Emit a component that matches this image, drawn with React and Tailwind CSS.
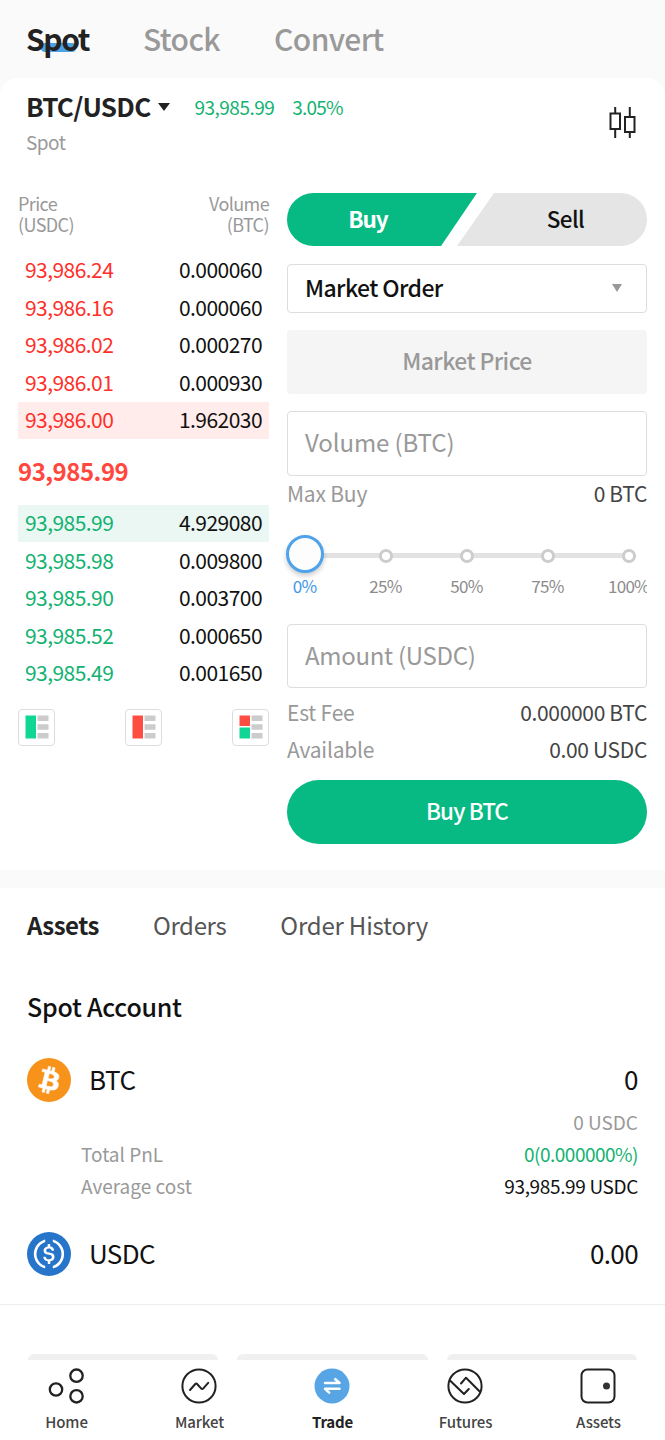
import React from 'react'

const asks = [
  { price: '93,986.24', volume: '0.000060' },
  { price: '93,986.16', volume: '0.000060' },
  { price: '93,986.02', volume: '0.000270' },
  { price: '93,986.01', volume: '0.000930' },
  { price: '93,986.00', volume: '1.962030', active: true },
]

const bids = [
  { price: '93,985.99', volume: '4.929080', active: true },
  { price: '93,985.98', volume: '0.009800' },
  { price: '93,985.90', volume: '0.003700' },
  { price: '93,985.52', volume: '0.000650' },
  { price: '93,985.49', volume: '0.001650' },
]

const steps = ['0%', '25%', '50%', '75%', '100%']

function TopTabs() {
  return (
    <div className="flex h-[78px] items-center gap-[54px] bg-[#fafafa] pb-[2px] pl-[26px] text-[30px] font-medium leading-[40px] tracking-[-0.6px] text-[#999]">
      <button className="relative font-bold text-[#222]">
        <span className="absolute bottom-[6px] left-[15px] h-[9px] w-[35px] rounded-[4px] bg-[#4fa1e6]" />
        <span className="relative tracking-[-1.4px]">Spot</span>
      </button>
      <button>Stock</button>
      <button>Convert</button>
    </div>
  )
}

function PairHeader() {
  return (
    <div className="flex h-[115px] justify-between pl-[26px] pr-[29px] pt-[13px]">
      <div>
        <div className="flex h-8 items-center">
          <h1 className="pb-[3px] text-[26px] font-bold tracking-[-0.75px] text-[#222]">BTC/USDC</h1>
          <svg className="ml-2 h-2 w-3" viewBox="0 0 12 8" fill="#222">
            <path d="M0 0h12L6 8z" />
          </svg>
          <span className="ml-6 text-[19px] tracking-[-0.5px] text-[#13b271]">93,985.99</span>
          <span className="ml-[18px] text-[19px] tracking-[-0.8px] text-[#13b271]">3.05%</span>
        </div>
        <p className="mt-[3px] text-[19px] leading-8 tracking-[-0.5px] text-[#999]">Spot</p>
      </div>
      <svg className="mt-4 h-[31px] w-[27px]" viewBox="0 0 27 31" fill="none" stroke="#222" strokeWidth="2">
        <path d="M1.5 6.5h9.5v15.5h-9.5zM6.2 0v6.5M6.2 22v9M16 10h9.5v15h-9.5zM20.8 0v10M20.8 25v6" />
      </svg>
    </div>
  )
}

function BookRow({ row, side }) {
  const color = side === 'ask' ? 'text-[#ff2f2a]' : 'text-[#13b271]'
  const bg = side === 'ask' ? 'bg-[#ffeceb]' : 'bg-[#eaf7f3]'
  return (
    <div className={`flex h-[37.4px] items-center justify-between px-[7px] pb-px text-[21px] tracking-[-0.55px] ${row.active ? bg : ''}`}>
      <span className={color}>{row.price}</span>
      <span className="text-[#111]">{row.volume}</span>
    </div>
  )
}

function DepthButton({ top, bottom }) {
  return (
    <button className="flex size-[37px] items-center justify-center rounded-[4px] border border-[#ddd]">
      <svg className="h-6 w-6" viewBox="0 0 24 24">
        <path d={top === bottom ? 'M0.5 0.5h10.5v23h-10.5z' : 'M0.5 0.5h10.5v10.5h-10.5z'} fill={top} />
        {top !== bottom && <path d="M0.5 12.5h10.5v11h-10.5z" fill={bottom} />}
        <path d="M12.5 0.5h11v5.5h-11zM12.5 9.2h11v5.5h-11zM12.5 18h11v5.5h-11z" fill="#ccc" />
      </svg>
    </button>
  )
}

function OrderBook() {
  return (
    <div className="w-[251px]">
      <div className="flex justify-between text-[18px] leading-[21px] tracking-[-0.6px] text-[#999]">
        <span>Price<br />(USDC)</span>
        <span className="text-right">Volume<br />(BTC)</span>
      </div>
      <div className="mt-[17px]">
        {asks.map((row) => (
          <BookRow key={row.price} row={row} side="ask" />
        ))}
      </div>
      <p className="h-[66px] text-[24px] font-bold leading-[64px] tracking-[-0.5px] text-[#ff473d]">93,985.99</p>
      <div>
        {bids.map((row) => (
          <BookRow key={row.price} row={row} side="bid" />
        ))}
      </div>
      <div className="mt-[17px] flex justify-between">
        <DepthButton top="#0fd694" bottom="#0fd694" />
        <DepthButton top="#ff4d42" bottom="#ff4d42" />
        <DepthButton top="#ff4d42" bottom="#0fd694" />
      </div>
    </div>
  )
}

function SideToggle() {
  return (
    <div className="flex h-[53px] text-[22.5px] font-medium tracking-[-0.6px]">
      <button className="w-[190px] rounded-l-full bg-[#07ba83] pb-[2px] pr-7 font-bold tracking-[-1px] text-white [clip-path:polygon(0_0,100%_0,154px_100%,0_100%)]">
        Buy
      </button>
      <button className="-ml-5 w-[190px] rounded-r-full bg-[#e5e5e5] pb-[2px] pl-[27px] text-[#111] [clip-path:polygon(37px_0,100%_0,100%_100%,0_100%)]">
        Sell
      </button>
    </div>
  )
}

function PercentSlider() {
  return (
    <div className="-ml-2 mt-[21px] h-[72px] overflow-x-clip pl-2 text-[17px] tracking-[-0.7px] text-[#8c8c8c]">
      <div className="relative h-[41px]">
        <div className="absolute left-4 top-[19px] h-[5px] w-[326px] bg-[#e2e2e2]" />
        <div className="relative flex h-[43px] w-[405px] items-center">
          {steps.map((step, i) => (
            <div key={step} className={i === 0 ? '-ml-[23px] flex w-[81px] justify-center' : 'flex w-[81px] justify-center'}>
              {i === 0 ? (
                <span className="relative -top-[2px] size-[38px] shrink-0 rounded-full border-[3px] border-[#4fa3ea] bg-[#fdfdfd] shadow-[0_3px_5px_rgba(0,0,0,0.2)]" />
              ) : (
                <span className="size-[14px] rounded-full border-[3px] border-[#ccc] bg-white" />
              )}
            </div>
          ))}
        </div>
      </div>
      <div className="flex w-[405px]">
        {steps.map((step, i) => (
          <span key={step} className={i === 0 ? '-ml-[23px] w-[81px] text-center leading-[21px] text-[#4096e8]' : 'w-[81px] text-center leading-[21px]'}>
            {step}
          </span>
        ))}
      </div>
    </div>
  )
}

function InfoLine({ label, value }) {
  return (
    <div className="flex h-[37px] items-center justify-between pb-[2px] text-[21px] tracking-[-0.33px]">
      <span className="tracking-[-0.2px] text-[#999]">{label}</span>
      <span className="text-[#444]">{value}</span>
    </div>
  )
}

function OrderForm() {
  return (
    <div className="w-[360px]">
      <SideToggle />
      <div className="mt-[18px] flex h-[49px] items-center justify-between rounded-[4px] border border-[#ddd] pl-[17px] pr-6 text-[23px] font-medium tracking-[-0.6px] text-[#111]">
        <span className="pb-[3px]">Market Order</span>
        <svg className="mb-[2px] h-2 w-[10px]" viewBox="0 0 10 8" fill="#999">
          <path d="M0 0h10L5 8z" />
        </svg>
      </div>
      <div className="mt-[17px] flex h-[64px] items-center justify-center rounded-[4px] bg-[#f5f5f5] pb-[3px] text-[23px] font-medium tracking-[-0.6px] text-[#999]">
        Market Price
      </div>
      <div className="mt-[17px] flex h-[65px] items-center rounded-[4px] border border-[#ddd] pb-[3px] pl-[17px] text-[24px] tracking-[-0.1px] text-[#999]">
        Volume (BTC)
      </div>
      <InfoLine label="Max Buy" value="0 BTC" />
      <PercentSlider />
      <div className="mt-[18px] flex h-[64px] items-center rounded-[4px] border border-[#ddd] pb-[3px] pl-[17px] text-[24px] tracking-[-0.3px] text-[#999]">
        Amount (USDC)
      </div>
      <div className="mt-[7px]">
        <InfoLine label="Est Fee" value="0.000000 BTC" />
        <InfoLine label="Available" value="0.00 USDC" />
      </div>
      <button className="mt-[11px] h-[64px] w-full rounded-full bg-[#07ba83] pb-[3px] text-[22.5px] font-medium tracking-[-0.9px] text-white">
        Buy BTC
      </button>
    </div>
  )
}

function BitcoinIcon() {
  return (
    <svg className="size-11" viewBox="0 0 32 32">
      <circle cx="16" cy="16" r="16" fill="#f7931a" />
      <path
        fill="#fff"
        stroke="#fff"
        strokeWidth="0.4"
        fillRule="evenodd"
        d="M23.189 14.02c.314-2.096-1.283-3.223-3.465-3.975l.708-2.84-1.728-.43-.69 2.765c-.454-.114-.92-.22-1.385-.326l.695-2.783L15.596 6l-.708 2.839c-.376-.086-.746-.17-1.104-.26l.002-.009-2.384-.595-.46 1.846s1.283.294 1.256.312c.7.175.826.638.805 1.006l-.806 3.235c.048.012.11.03.18.057l-.183-.045-1.13 4.532c-.086.212-.303.531-.793.41.018.025-1.256-.313-1.256-.313l-.858 1.978 2.25.561c.418.105.828.215 1.231.318l-.715 2.872 1.727.43.708-2.84c.472.127.93.245 1.378.357l-.706 2.828 1.728.43.715-2.866c2.948.558 5.164.333 6.097-2.333.752-2.146-.037-3.385-1.588-4.192 1.13-.26 1.98-1.003 2.207-2.538zm-3.95 5.538c-.533 2.147-4.148.986-5.32.695l.95-3.805c1.172.293 4.929.872 4.37 3.11zm.535-5.569c-.487 1.953-3.495.96-4.47.717l.86-3.45c.975.243 4.118.696 3.61 2.733z"
      />
    </svg>
  )
}

function UsdcIcon() {
  return (
    <svg className="size-11" viewBox="0 0 32 32" fill="#fff">
      <circle cx="16" cy="16" r="16" fill="#2775ca" />
      <path d="M20.022 18.124c0-2.124-1.28-2.852-3.84-3.156-1.828-.243-2.193-.728-2.193-1.578 0-.85.61-1.396 1.828-1.396 1.097 0 1.707.364 2.011 1.275a.458.458 0 00.427.303h.975a.416.416 0 00.427-.425v-.06a3.04 3.04 0 00-2.743-2.489V9.142c0-.243-.183-.425-.487-.486h-.915c-.243 0-.426.182-.487.486v1.396c-1.829.242-2.986 1.456-2.986 2.974 0 2.002 1.218 2.791 3.778 3.095 1.707.303 2.255.668 2.255 1.639 0 .97-.853 1.638-2.011 1.638-1.585 0-2.133-.667-2.316-1.578-.06-.242-.244-.364-.427-.364h-1.036a.416.416 0 00-.426.425v.06c.243 1.518 1.219 2.61 3.23 2.914v1.457c0 .242.183.425.487.485h.915c.243 0 .426-.182.487-.485V21.34c1.829-.303 3.047-1.578 3.047-3.217z" />
      <path d="M12.892 24.497c-4.754-1.7-7.192-6.98-5.424-11.653.914-2.55 2.925-4.491 5.424-5.402.244-.121.365-.303.365-.607v-.85c0-.242-.121-.424-.365-.485-.061 0-.183 0-.244.06a10.895 10.895 0 00-7.13 13.717c1.096 3.4 3.717 6.01 7.13 7.102.244.121.488 0 .548-.243.061-.06.061-.122.061-.243v-.85c0-.182-.182-.424-.365-.546zm6.46-18.936c-.244-.122-.488 0-.548.242-.061.061-.061.122-.061.243v.85c0 .243.182.485.365.607 4.754 1.7 7.192 6.98 5.424 11.653-.914 2.55-2.925 4.491-5.424 5.402-.244.121-.365.303-.365.607v.85c0 .242.121.424.365.485.061 0 .183 0 .244-.06a10.895 10.895 0 007.13-13.717c-1.096-3.46-3.778-6.07-7.13-7.162z" />
    </svg>
  )
}

function Assets() {
  return (
    <section className="h-[417px] border-b border-[#eee] px-[27px] pt-[17px]">
      <div className="flex h-10 items-center gap-[54px] text-[24px] tracking-[-0.35px] text-[#555]">
        <span className="font-bold tracking-[-0.5px] text-[#222]">Assets</span>
        <span>Orders</span>
        <span className="tracking-[-0.2px]">Order History</span>
      </div>
      <h2 className="mt-[41px] text-[25px] font-medium leading-10 tracking-[-0.25px] text-[#111]">Spot Account</h2>
      <div className="mt-8 flex h-11 items-center text-[26px] tracking-[-0.4px] text-[#111]">
        <BitcoinIcon />
        <span className="ml-[18px] pb-[3px]">BTC</span>
        <span className="ml-auto pb-[3px]">0</span>
      </div>
      <div className="mt-[4px] text-[19px] leading-8 text-[#999]">
        <p className="text-right">0 USDC</p>
        <p className="flex justify-between pl-[54px]">
          Total PnL <span className="tracking-[-0.5px] text-[#13b271]">0(0.000000%)</span>
        </p>
        <p className="flex justify-between pl-[54px]">
          Average cost <span className="tracking-[-0.35px] text-[#111]">93,985.99 USDC</span>
        </p>
      </div>
      <div className="mt-[30px] flex h-11 items-center text-[26px] tracking-[-0.6px] text-[#111]">
        <UsdcIcon />
        <span className="ml-[18px] pb-[3px]">USDC</span>
        <span className="ml-auto pb-[3px]">0.00</span>
      </div>
    </section>
  )
}

const navItems = [
  {
    label: 'Home',
    icon: (
      <>
        <circle cx="8" cy="21.5" r="6.2" strokeWidth="2.3" />
        <circle cx="28.5" cy="7.7" r="6.2" strokeWidth="2.3" />
        <circle cx="28.5" cy="28.3" r="6.2" strokeWidth="2.3" />
      </>
    ),
  },
  {
    label: 'Market',
    icon: (
      <>
        <circle cx="18" cy="18" r="16.6" />
        <path d="M9 22l5.3-6q.9-1 1.8 0l4.2 4.6q.9 1 1.8 0l5.1-5.8" />
      </>
    ),
  },
  {
    label: 'Trade',
    active: true,
    icon: (
      <>
        <circle cx="18" cy="18" r="17.5" fill="#57a5e5" stroke="none" />
        <path d="M11 15h14.5l-4.2-3.8M25.5 20.8h-14.5l4.2 3.8" stroke="#fff" strokeWidth="2.5" strokeLinejoin="round" />
      </>
    ),
  },
  {
    label: 'Futures',
    icon: (
      <>
        <circle cx="18" cy="18" r="16.6" />
        <path d="M3 12.5l14 13.5 4.8-5M14 15.5l5-5.8 13.7 13.8" strokeLinejoin="round" />
      </>
    ),
  },
  {
    label: 'Assets',
    icon: (
      <>
        <rect x="1.5" y="1.5" width="33" height="33" rx="6" />
        <circle cx="26.5" cy="18" r="3.5" fill="#333" stroke="none" />
      </>
    ),
  },
]

function BottomNav() {
  return (
    <nav className="flex h-[80px] bg-white pt-2">
      {navItems.map((item) => (
        <button key={item.label} className="flex flex-1 flex-col items-center">
          <svg className="mr-px size-9" viewBox="0 0 36 36" fill="none" stroke="#222" strokeWidth="2" strokeLinecap="round">
            {item.icon}
          </svg>
          <span className={item.active ? 'mt-2 text-[15px] font-bold leading-5 tracking-[-0.2px] text-[#222]' : 'mt-2 text-[15px] font-medium leading-5 tracking-[-0.1px] text-[#444]'}>
            {item.label}
          </span>
        </button>
      ))}
    </nav>
  )
}

export default function App() {
  return (
    <div className="h-[1440px] w-[665px] overflow-hidden bg-white font-['Noto_Sans_CJK_SC',sans-serif]">
      <TopTabs />
      <div className="bg-[#fafafa]">
        <main className="h-[792px] rounded-t-[18px] bg-white">
          <PairHeader />
          <div className="flex justify-between pl-[18px] pr-[18px]">
            <OrderBook />
            <OrderForm />
          </div>
        </main>
        <div className="h-[18px]" />
      </div>
      <Assets />
      <div className="flex h-[55px] items-end justify-between px-7">
        <div className="h-[6px] w-[190px] rounded-t-[8px] bg-[#f0f0f0]" />
        <div className="h-[6px] w-[191px] rounded-t-[8px] bg-[#f0f0f0]" />
        <div className="h-[6px] w-[190px] rounded-t-[8px] bg-[#f0f0f0]" />
      </div>
      <BottomNav />
    </div>
  )
}
